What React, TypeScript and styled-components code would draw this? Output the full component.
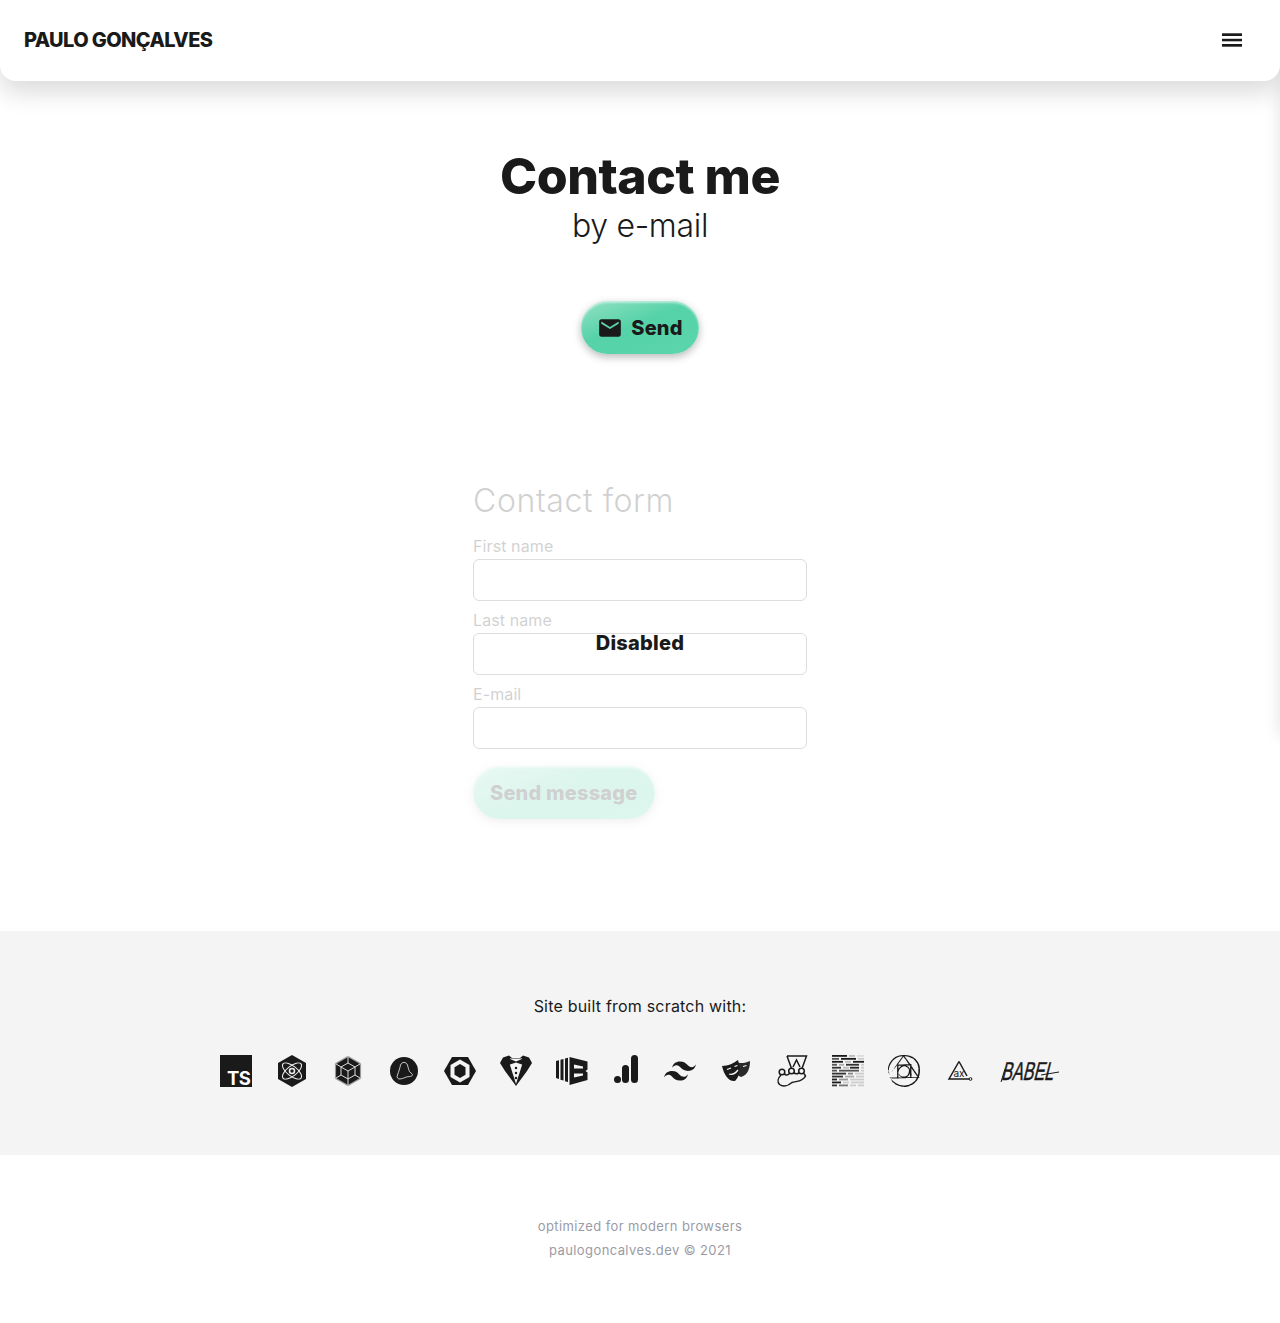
import React from "react";
import styled, { createGlobalStyle } from "styled-components";
import { SiPostcss, SiTailwindcss } from "react-icons/si";

const INK = "#1a1a1a";

const Global = createGlobalStyle`
  html, body { margin: 0; padding: 0; background: #fff; }
  body { font-family: Inter, "Liberation Sans", sans-serif; color: ${INK}; }
  * { box-sizing: border-box; }
`;

const Page = styled.div`
  position: relative;
  overflow: hidden;
  min-height: 1323px;
`;

const Drawer = styled.div`
  position: absolute;
  top: 0;
  left: 100%;
  width: 300px;
  height: 735px;
  box-shadow: 0 0 16px rgba(0, 0, 0, 0.12);
`;

const Header = styled.header`
  position: relative;
  z-index: 2;
  height: 81px;
  padding: 0 24px 1px;
  display: flex;
  align-items: center;
  justify-content: space-between;
  background: #fff;
  border-radius: 0 0 16px 16px;
  box-shadow: 0 12px 24px rgba(0, 0, 0, 0.14);
`;

const Brand = styled.div`
  font-size: 20px;
  font-weight: 800;
  letter-spacing: -0.6px;
`;

const MenuButton = styled.button`
  width: 48px;
  height: 48px;
  padding: 0;
  border: 0;
  background: none;
  display: flex;
  align-items: center;
  justify-content: center;
  color: ${INK};
`;

const Hero = styled.section`
  padding-top: 66px;
  display: flex;
  flex-direction: column;
  align-items: center;
`;

const Title = styled.h1`
  margin: 0;
  font-size: 50px;
  line-height: 58px;
  font-weight: 800;
  letter-spacing: -0.5px;
`;

const Subtitle = styled.h2`
  margin: 0;
  font-size: 32px;
  line-height: 42px;
  font-weight: 300;
  letter-spacing: -0.3px;
`;

const GlossButton = styled.button`
  height: 53px;
  padding: 0 16px;
  border: 0;
  border-radius: 27px;
  display: inline-flex;
  align-items: center;
  gap: 8px;
  font-family: inherit;
  font-size: 20px;
  font-weight: 800;
  letter-spacing: 0.2px;
  color: ${INK};
  background: linear-gradient(160deg, #93e1c5 0%, #55d2a7 45%, #5cd5ad 100%);
  box-shadow: inset 0 2px 2px rgba(255, 255, 255, 0.5), 0 3px 8px rgba(0, 0, 0, 0.28);
`;

const SendWrap = styled.div`
  margin-top: 54px;
`;

const FormSection = styled.section`
  position: relative;
  width: 334px;
  margin: 125px auto 0;
  padding-bottom: 112px;
`;

const FormBody = styled.form`
  opacity: 0.2;
  display: flex;
  flex-direction: column;
`;

const FormTitle = styled.h3`
  margin: 0 0 11px;
  font-size: 32px;
  line-height: 44px;
  font-weight: 300;
  letter-spacing: 0.6px;
`;

const Label = styled.label`
  display: block;
  font-size: 16px;
  line-height: 24px;
  height: 25px;
  font-weight: 400;
  letter-spacing: 0.1px;
  margin-top: 7px;
  &:first-of-type { margin-top: 0; }
`;

const Input = styled.input`
  display: block;
  width: 100%;
  height: 42px;
  border: 1px solid #5a5a6a;
  border-radius: 6px;
  background: #fff;
`;

const SubmitRow = styled.div`
  margin-top: 17px;
  & > button { padding: 0 17px; }
`;

const DisabledNote = styled.div`
  position: absolute;
  left: 0;
  right: 0;
  top: 152px;
  text-align: center;
  font-size: 20px;
  line-height: 24px;
  font-weight: 800;
  letter-spacing: 0.25px;
`;

const Built = styled.section`
  height: 224px;
  background: #f4f4f4;
  padding-top: 63px;
  display: flex;
  flex-direction: column;
  align-items: center;
`;

const BuiltText = styled.p`
  margin: 0;
  font-size: 16px;
  line-height: 24px;
  font-weight: 400;
  letter-spacing: 0.2px;
`;

const IconRow = styled.div`
  margin-top: 37px;
  display: flex;
  gap: 24px;
`;

const Logo = styled.div<{ $w?: number }>`
  width: ${(p) => p.$w ?? 32}px;
  height: 32px;
  display: flex;
  align-items: center;
  justify-content: center;
  color: ${INK};
  flex: none;
  svg { display: block; flex: none; overflow: visible; }
`;

const Foot = styled.footer`
  padding-top: 59px;
  text-align: center;
  font-size: 13px;
  line-height: 24px;
  letter-spacing: 0.4px;
  color: #9b9ba6;
`;

const LINES: [number, number, string][][] = [
  [[0, 15, "#1a1a1a"], [17, 6, "#bbb"], [25, 7, "#ddd"]],
  [[0, 7, "#555"], [9, 15, "#1a1a1a"], [26, 6, "#ccc"]],
  [[0, 11, "#1a1a1a"], [13, 6, "#bbb"], [21, 11, "#1a1a1a"]],
  [[0, 5, "#555"], [7, 5, "#aaa"], [14, 13, "#333"], [29, 3, "#ccc"]],
  [[0, 9, "#333"], [11, 6, "#bbb"], [18, 9, "#222"], [29, 3, "#ccc"]],
  [[0, 5, "#555"], [7, 20, "#555"], [29, 3, "#ccc"]],
  [[0, 14, "#333"], [16, 5, "#888"], [23, 9, "#ccc"]],
  [[0, 11, "#333"], [13, 9, "#aaa"], [24, 8, "#ccc"]],
  [[0, 5, "#222"], [7, 9, "#999"], [18, 14, "#ccc"]],
  [[0, 9, "#1a1a1a"], [11, 6, "#ccc"], [19, 13, "#ccc"]],
  [[0, 5, "#333"], [7, 9, "#777"], [18, 6, "#ccc"], [26, 6, "#ccc"]],
];

function TsLogo() {
  return (
    <svg width="32" height="32" viewBox="0 0 32 32">
      <rect width="32" height="32" fill={INK} />
      <text x="7" y="29.5" fontFamily="Inter, sans-serif" fontSize="18.5" fontWeight="700" fill="#fff" letterSpacing="-0.6">TS</text>
    </svg>
  );
}

function AtomLogo() {
  return (
    <svg width="32" height="32" viewBox="0 0 32 32">
      <path d="M16 0 30 8V24L16 32 2 24V8Z" fill={INK} />
      <g fill="none" stroke="#eeeeee" strokeWidth="1">
        <ellipse cx="16" cy="16" rx="11.5" ry="5" transform="rotate(38 16 16)" />
        <ellipse cx="16" cy="16" rx="11.5" ry="5" transform="rotate(-38 16 16)" />
        <circle cx="16" cy="16" r="2.5" strokeWidth="1.6" />
      </g>
    </svg>
  );
}

function CubeLogo() {
  return (
    <svg width="32" height="32" viewBox="0 0 32 32">
      <path d="M16 1.5 28.5 8.7v14.6L16 30.5 3.5 23.3V8.7Z" fill={INK} stroke="#9a9a9a" strokeWidth="1.2" />
      <path d="M16 8 23 12v8l-7 4-7-4v-8ZM16 16v8M16 16l7-4M16 16 9 12M16 1.5V8M28.5 8.7 23 12M3.5 8.7 9 12M3.5 23.3 9 20M28.5 23.3 23 20M16 30.5V24" fill="none" stroke="#f0f0f0" strokeWidth="0.9" />
    </svg>
  );
}

function BootLogo() {
  return (
    <svg width="32" height="32" viewBox="0 0 32 32">
      <circle cx="16" cy="16" r="14" fill={INK} />
      <path d="M12.5 10C14 6.5 18 6.5 19.5 10 20.5 13 20.5 16.5 23 18 25.5 19.5 24.5 21.5 21.5 21.5 18 21.5 16 23.5 12 24 9.5 24 8.5 22.5 9.5 20 10.5 17 12 13 12.5 10Z" fill="none" stroke="#f0f0f0" strokeWidth="0.8" />
    </svg>
  );
}

function HexLogo() {
  return (
    <svg width="32" height="32" viewBox="0 0 32 32">
      <path d="M8 2H24L32 16 24 30H8L0 16Z" fill={INK} />
      <path d="M16 4.5 25.5 10V22L16 27.5 6.5 22V10Z" fill="#f4f4f4" />
      <path d="M16 9 21.5 12.2V19.8L16 23 10.5 19.8V12.2Z" fill={INK} />
    </svg>
  );
}

function TuxLogo() {
  return (
    <svg width="32" height="32" viewBox="0 0 32 32">
      <path d="M3 2.5 9 0.5 12 3H20L23 0.5 29 2.5 32 8 27 16 16 31 5 16 0 8Z" fill={INK} />
      <path d="M10 3.5H22V10L16 29 10 10Z" fill="#f4f4f4" />
      <path d="M10 4 16 6.5 22 4V9.5L16 7.5 10 9.5Z" fill={INK} />
      <circle cx="16" cy="13" r="1.25" fill={INK} />
      <circle cx="16" cy="18" r="1.25" fill={INK} />
      <circle cx="16" cy="23" r="1.25" fill={INK} />
    </svg>
  );
}

function BlocksLogo() {
  return (
    <svg width="32" height="32" viewBox="0 0 32 32">
      <path d="M0 6 3 5.2V24L0 23ZM4.5 4.8 7.5 4V25.5L4.5 24.7ZM9 3.6 12 2.8V27L9 26.2Z" fill={INK} />
      <path d="M13.5 2 31.5 6.5V14.5L29.5 16 31.5 17.5V25L13.5 30Z" fill={INK} />
      <path d="M18 9.5 27 11.5V13.5H18ZM18 18.5H27V20.5L18 22.5Z" fill="#f4f4f4" />
    </svg>
  );
}

function BarsLogo() {
  return (
    <svg width="28" height="32" viewBox="0 0 28 32">
      <circle cx="5.5" cy="24.5" r="3.5" fill={INK} />
      <rect x="10" y="10" width="7" height="18" rx="3.5" fill={INK} />
      <rect x="19" y="0" width="7" height="28" rx="3.5" fill={INK} />
    </svg>
  );
}

function MasksLogo() {
  return (
    <svg width="32" height="32" viewBox="0 0 32 32">
      <path d="M15 7C20 9 26 8 30 6 30 13 28 20 21 22 18 21 16 18 15 15Z" fill="#2b2b2b" />
      <path d="M2 11C8 11 14 8 18 5 20 12 21 20 15 26 9 27 4 20 2 11Z" fill={INK} />
      <path d="M7 14.5 11 13M14.5 11.5 17.5 10.5M9 19C12 20 15 19 18 15M23 11.5 26.5 10.5" stroke="#f4f4f4" strokeWidth="1.3" fill="none" />
    </svg>
  );
}

function JestLogo() {
  return (
    <svg width="32" height="32" viewBox="0 0 32 32" fill="none" stroke={INK} strokeWidth="1.5">
      <path d="M11 1H30.5L26 13.5M11 1 15.5 13.5M17 12 20.5 5 24 12" />
      <circle cx="6" cy="17" r="2.8" />
      <circle cx="15.5" cy="16" r="2.8" />
      <circle cx="25.5" cy="16" r="2.8" />
      <path d="M5 20C2 23 1 27 3.5 29.5 7 32 12 31 16 27.5 20 26 27 27 29.5 21L28 18.5M8.5 18.5C9 21 12 20 13.5 18.5M18 17.5C19 19 21 19 23 18" />
    </svg>
  );
}

function LinesLogo() {
  return (
    <svg width="32" height="32" viewBox="0 0 32 32">
      {LINES.map((row, i) =>
        row.map(([x, w, c], j) => <rect key={`${i}-${j}`} x={x} y={i * 2.95} width={w} height="1.8" fill={c} />)
      )}
    </svg>
  );
}

function AxLogo() {
  return (
    <svg width="32" height="32" viewBox="0 0 32 32">
      <path d="M15 6.5 5 24H25.5M15 6.5 23 21" fill="none" stroke={INK} strokeWidth="1.5" />
      <circle cx="26.5" cy="24" r="1.4" fill="none" stroke={INK} strokeWidth="1" />
      <text x="9.5" y="22" fontFamily="Inter, sans-serif" fontSize="10" fontWeight="400" fill={INK}>ax</text>
    </svg>
  );
}

function BabelLogo() {
  return (
    <svg width="60" height="32" viewBox="0 0 60 32">
      <text
        x="7"
        y="25"
        transform="skewX(-14)"
        fontFamily="'Liberation Sans', sans-serif"
        fontWeight="400"
        fontSize="26"
        fill={INK}
        stroke={INK}
        strokeWidth="0.5"
        textLength="52"
        lengthAdjust="spacingAndGlyphs"
      >
        BABEL
      </text>
      <path d="M1 27 5 14M41 20 59 17" stroke={INK} strokeWidth="1" fill="none" />
    </svg>
  );
}

const Send = () => (
  <svg width="26" height="26" viewBox="0 0 24 24" fill={INK}>
    <path d="M20 4H4c-1.1 0-1.99.9-1.99 2L2 18c0 1.1.9 2 2 2h16c1.1 0 2-.9 2-2V6c0-1.1-.9-2-2-2zm0 4l-8 5-8-5V6l8 5 8-5v2z" />
  </svg>
);

export default function App() {
  return (
    <Page>
      <Global />
      <Drawer />
      <Header>
        <Brand>PAULO GONÇALVES</Brand>
        <MenuButton aria-label="menu">
          <svg width="24" height="24" viewBox="0 0 24 24" fill="currentColor">
            <rect x="2" y="5.3" width="20" height="2.7" />
            <rect x="2" y="10.8" width="20" height="2.5" />
            <rect x="2" y="16" width="20" height="2.7" />
          </svg>
        </MenuButton>
      </Header>
      <Hero>
        <Title>Contact me</Title>
        <Subtitle>by e-mail</Subtitle>
        <SendWrap>
          <GlossButton type="button">
            <Send />
            Send
          </GlossButton>
        </SendWrap>
      </Hero>
      <FormSection>
        <FormBody>
          <FormTitle>Contact form</FormTitle>
          <Label>First name</Label>
          <Input disabled />
          <Label>Last name</Label>
          <Input disabled />
          <Label>E-mail</Label>
          <Input disabled />
          <SubmitRow>
            <GlossButton type="button" disabled>Send message</GlossButton>
          </SubmitRow>
        </FormBody>
        <DisabledNote>Disabled</DisabledNote>
      </FormSection>
      <Built>
        <BuiltText>Site built from scratch with:</BuiltText>
        <IconRow>
          <Logo><TsLogo /></Logo>
          <Logo><AtomLogo /></Logo>
          <Logo><CubeLogo /></Logo>
          <Logo><BootLogo /></Logo>
          <Logo><HexLogo /></Logo>
          <Logo><TuxLogo /></Logo>
          <Logo><BlocksLogo /></Logo>
          <Logo $w={28}><BarsLogo /></Logo>
          <Logo><SiTailwindcss size={32} /></Logo>
          <Logo><MasksLogo /></Logo>
          <Logo><JestLogo /></Logo>
          <Logo><LinesLogo /></Logo>
          <Logo><SiPostcss size={32} /></Logo>
          <Logo><AxLogo /></Logo>
          <Logo $w={60}><BabelLogo /></Logo>
        </IconRow>
      </Built>
      <Foot>
        optimized for modern browsers
        <br />
        paulogoncalves.dev © 2021
      </Foot>
    </Page>
  );
}
